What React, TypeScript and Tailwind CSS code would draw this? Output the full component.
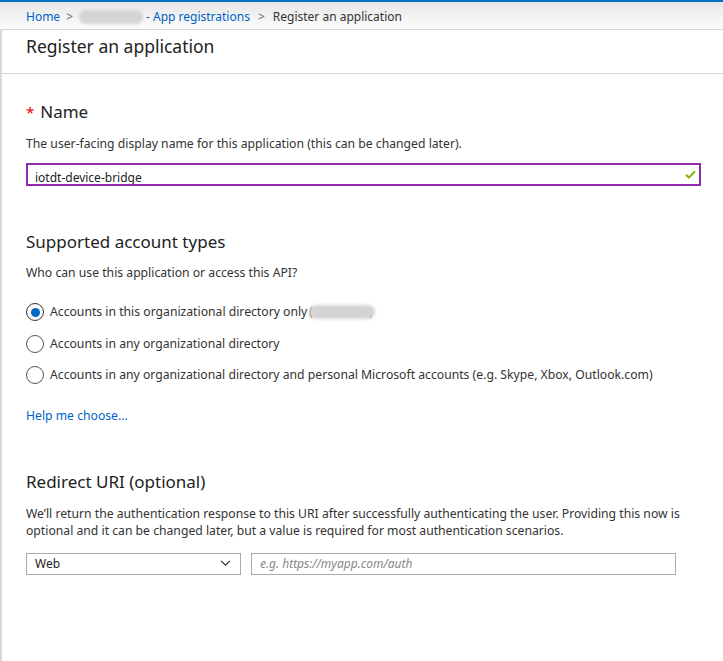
import { useState } from "react";

const font = { fontFamily: '"Noto Sans", "Open Sans", sans-serif' };

function Blur({ className }: { className: string }) {
    return <span className={`inline-block rounded-full bg-[#d4d4d4] blur-[1.5px] ${className}`} />;
}

function Radio({ checked, label, children }: { checked?: boolean; label: string; children?: React.ReactNode }) {
    return (
        <div className="flex h-[31.5px] items-center">
            <span
                className={`flex h-[18px] w-[18px] items-center justify-center rounded-full border ${
                    checked ? "border-[#333]" : "border-[#555]"
                }`}
            >
                {checked && <span className="h-[9px] w-[9px] rounded-full bg-[#0067c5]" />}
            </span>
            <span className="ml-[6px] text-[12.2px] text-[#333]">{label}</span>
            {children}
        </div>
    );
}

export default function App() {
    const [name, setName] = useState("iotdt-device-bridge");

    return (
        <div className="h-[661px] w-[723px] overflow-hidden bg-white text-[#333]" style={font}>
            <div className="h-[2px] bg-[#0072c6]" />
            <div className="flex h-[28px] items-center border-b border-[#d6d6d6] bg-gradient-to-b from-[#e6e6e6] to-[#fdfdfd] pl-[26px] pt-[3px] text-[12px]">
                <span className="text-[#0062c8]">Home</span>
                <span className="mx-[6px] text-[#666]">&gt;</span>
                <Blur className="h-[14px] w-[64px]" />
                <span className="ml-[3px] text-[#0062c8]">- App registrations</span>
                <span className="mx-[8px] text-[#666]">&gt;</span>
                <span className="text-[#333]">Register an application</span>
            </div>

            <div className="h-[631px] border-l-2 border-[#d9d9d9]">
                <div className="flex h-[44px] items-center border-b border-[#d6d6d6] pb-[11px] pl-[24px]">
                    <h1 className="text-[17.5px] text-[#222]">Register an application</h1>
                </div>

                <div className="pl-[24px] pr-[22px]">
                    <h2 className="mt-[25px] flex items-center text-[17px] text-[#222]">
                        <span className="mr-[6px] text-[15px] text-[#e00]">*</span>Name
                    </h2>
                    <p className="mt-[10px] text-[12.2px]">
                        The user-facing display name for this application (this can be changed later).
                    </p>
                    <div className="relative mt-[10px] h-[23px] border border-[#8e2aab] outline outline-1 -outline-offset-2 outline-[#8e2aab]">
                        <input
                            value={name}
                            onChange={(e) => setName(e.target.value)}
                            className="h-full w-full bg-transparent pl-[8px] text-[12px] text-[#222] outline-none"
                        />
                        <svg
                            viewBox="0 0 12 10"
                            className="absolute right-[4px] top-[6px] h-[9px] w-[11px]"
                        >
                            <path d="M1 5.2 L4.3 8.4 L11 1.4" fill="none" stroke="#7ab800" strokeWidth="2.2" />
                        </svg>
                    </div>

                    <h2 className="mt-[43px] text-[17px] text-[#222]">Supported account types</h2>
                    <p className="mt-[10px] text-[12.2px]">Who can use this application or access this API?</p>
                    <div className="mt-[14px]">
                        <Radio checked label="Accounts in this organizational directory only">
                            <span className="ml-[2px] text-[12.2px] text-[#333]">(</span>
                            <Blur className="-ml-[4px] h-[14px] w-[66px]" />
                            <span className="-ml-[6px] text-[12.2px] text-[#333]">)</span>
                        </Radio>
                        <Radio label="Accounts in any organizational directory" />
                        <Radio label="Accounts in any organizational directory and personal Microsoft accounts (e.g. Skype, Xbox, Outlook.com)" />
                    </div>
                    <a className="mt-[16px] block text-[12.2px] text-[#0062c8]">Help me choose...</a>

                    <h2 className="mt-[44px] text-[17px] text-[#222]">Redirect URI (optional)</h2>
                    <p className="mt-[10px] text-[12.2px] leading-[17px]">
                        We’ll return the authentication response to this URI after successfully authenticating the user. Providing this now is
                        optional and it can be changed later, but a value is required for most authentication scenarios.
                    </p>
                    <div className="mt-[14px] flex gap-[10px]">
                        <div className="flex h-[22px] w-[215px] items-center justify-between border border-[#aaa] pl-[8px] pr-[9px] text-[12px] text-[#222]">
                            <span>Web</span>
                            <svg viewBox="0 0 12 8" className="h-[7px] w-[11px]">
                                <path d="M1 1 L6 6 L11 1" fill="none" stroke="#333" strokeWidth="1.3" />
                            </svg>
                        </div>
                        <input
                            placeholder="e.g. https://myapp.com/auth"
                            className="h-[22px] w-[425px] border border-[#aaa] pl-[8px] text-[12px] italic outline-none placeholder:text-[#888]"
                        />
                    </div>
                </div>
            </div>
        </div>
    );
}
